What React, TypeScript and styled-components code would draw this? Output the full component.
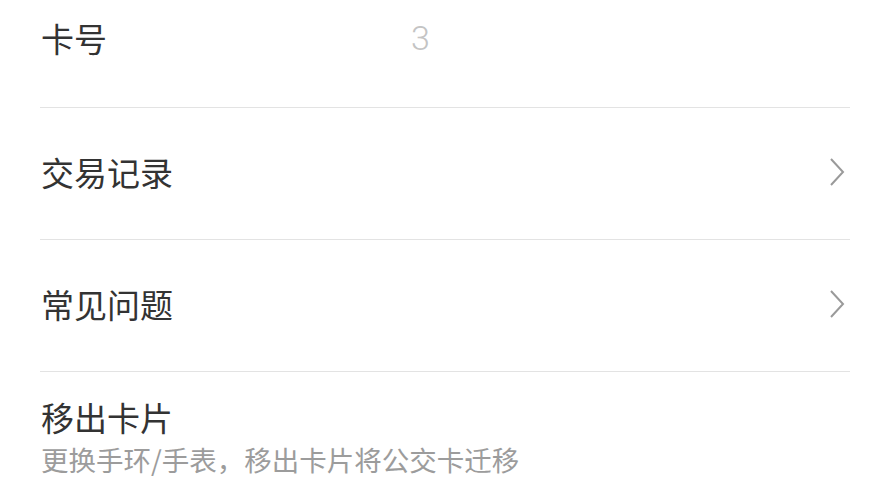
import React from "react";
import styled, { createGlobalStyle } from "styled-components";

const Global = createGlobalStyle`
  html, body { margin: 0; padding: 0; background: #fff; }
  body { font-family: "Noto Sans CJK SC", "Noto Sans", sans-serif; overflow: hidden; }
`;

const List = styled.div`
  width: 890px;
  height: 500px;
  padding: 0 40px;
  box-sizing: border-box;
  display: flex;
  flex-direction: column;
`;

const Row = styled.div<{ $h: number; $pb?: number }>`
  height: ${(p) => p.$h}px;
  flex: none;
  display: flex;
  align-items: center;
  justify-content: space-between;
  padding-left: 1px;
  padding-bottom: ${(p) => p.$pb ?? 4}px;
  box-sizing: border-box;
  border-bottom: 1px solid #e3e3e3;
`;

const Stack = styled.div`
  display: flex;
  flex-direction: column;
  padding-top: 27px;
  padding-left: 1px;
`;

const Title = styled.span`
  font-size: 33px;
  line-height: 36px;
  color: #333;
`;

const Sub = styled.span`
  font-size: 27.5px;
  line-height: 30px;
  color: #9c9c9c;
  margin-top: 9px;
`;

const Value = styled.span`
  flex: 1;
  margin-left: 304px;
  font-family: "Roboto", "Noto Sans", sans-serif;
  font-size: 34px;
  font-weight: 300;
  color: #c4c4c4;
`;

const Chevron = () => (
  <svg width="20" height="30" viewBox="0 0 20 30" style={{ marginRight: 3 }}>
    <path d="M4 2 L16 15 L4 28" fill="none" stroke="#9a9a9a" strokeWidth="2" />
  </svg>
);

export default function App() {
  return (
    <>
      <Global />
      <List>
        <Row $h={108} $pb={32}>
          <Title>卡号</Title>
          <Value>3</Value>
        </Row>
        <Row $h={132}>
          <Title>交易记录</Title>
          <Chevron />
        </Row>
        <Row $h={132}>
          <Title>常见问题</Title>
          <Chevron />
        </Row>
        <Stack>
          <Title>移出卡片</Title>
          <Sub>更换手环/手表，移出卡片将公交卡迁移</Sub>
        </Stack>
      </List>
    </>
  );
}
